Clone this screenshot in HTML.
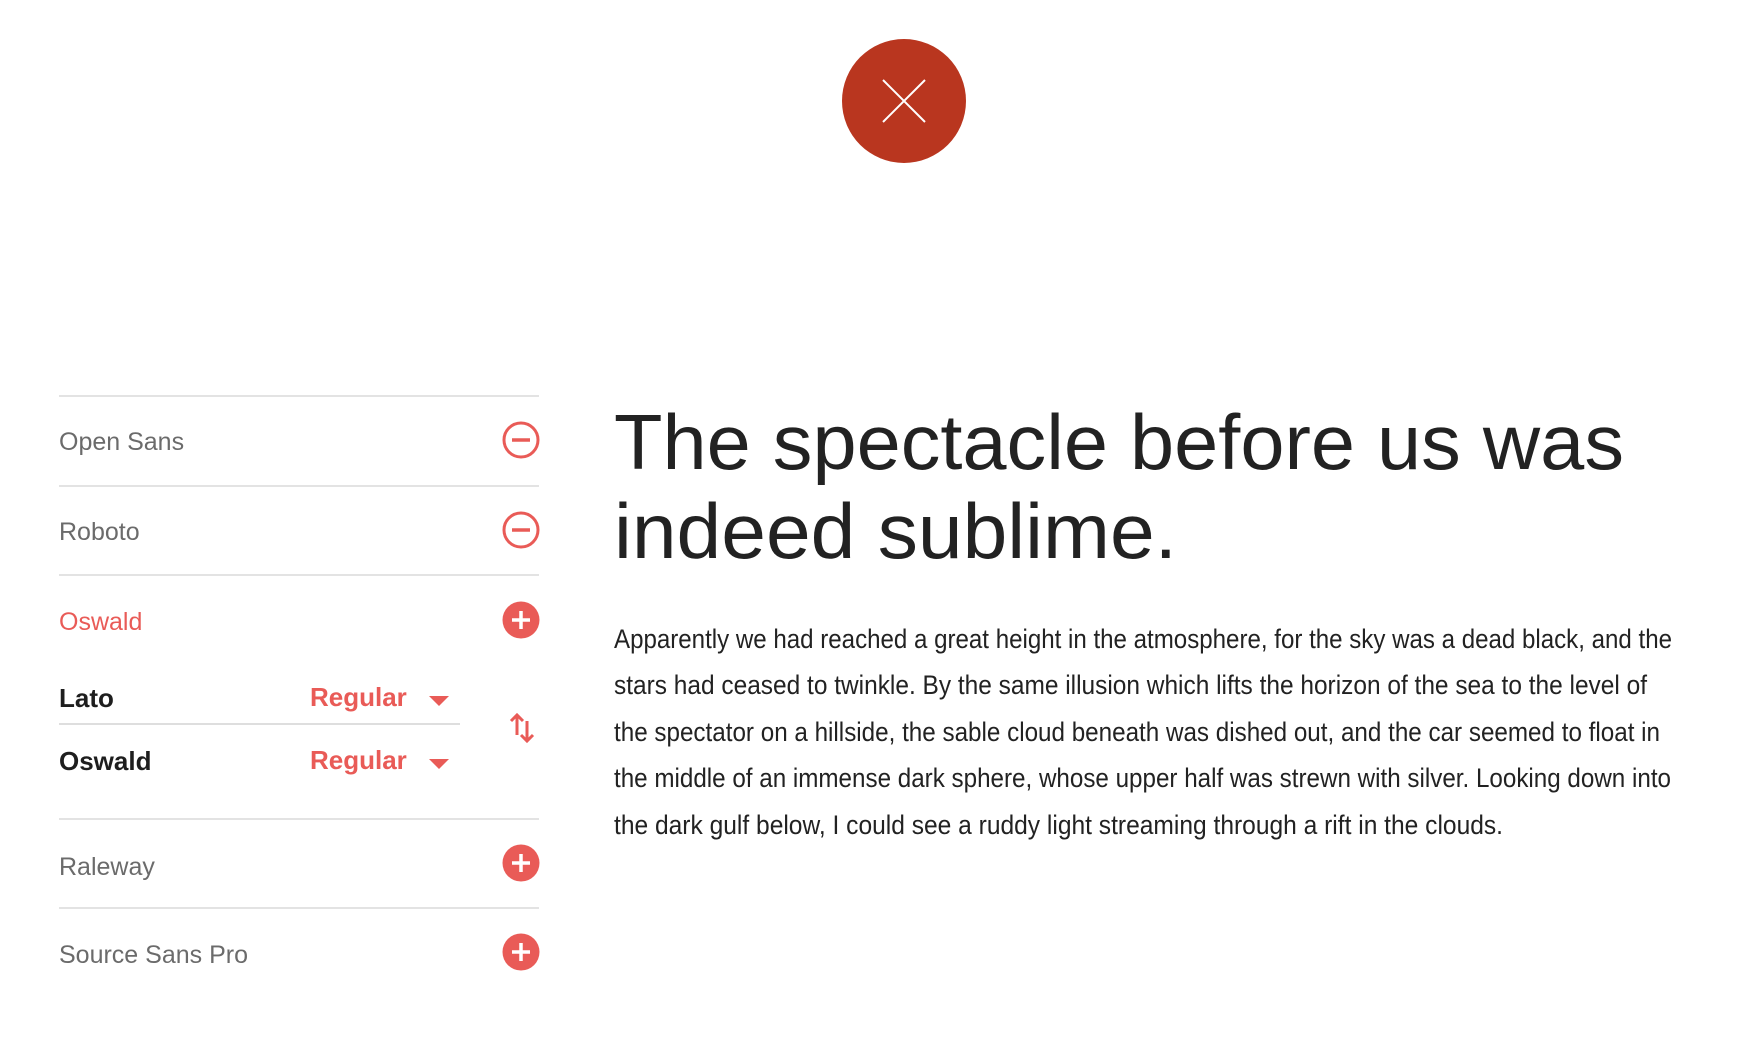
<!DOCTYPE html>
<html><head><meta charset="utf-8"><style>
html,body{margin:0;padding:0;background:#fff;width:1742px;height:1040px;overflow:hidden;position:relative;font-family:"Liberation Sans",sans-serif}
.line{position:absolute;left:59px;width:480px;height:2px;background:#e3e3e3}
.t{position:absolute;left:59px;font-size:25px;color:#6b6b6b;line-height:1}
.ic{position:absolute;left:502px;width:38px;height:38px}
.r{position:absolute;font-size:26px;font-weight:bold;color:#e95b57;line-height:1}
.d{position:absolute;left:59px;font-size:26px;font-weight:bold;color:#1e1e1e;line-height:1}
.car{position:absolute;width:0;height:0;border-left:10px solid transparent;border-right:10px solid transparent;border-top:10px solid #e95b57}
</style></head><body>
<svg style="position:absolute;left:842px;top:39px" width="124" height="124"><circle cx="62" cy="62" r="62" fill="#b9361f"/><path d="M41 41L83 83M83 41L41 83" stroke="#fff" stroke-width="2"/></svg>

<div class="line" style="top:395px"></div>
<div class="line" style="top:485px"></div>
<div class="line" style="top:574px"></div>
<div class="line" style="top:818px"></div>
<div class="line" style="top:907px"></div>

<div class="t" style="top:430px">Open Sans</div>
<div class="t" style="top:520px">Roboto</div>
<div class="t" style="top:610px;color:#e95b57">Oswald</div>
<div class="t" style="top:855px">Raleway</div>
<div class="t" style="top:943px">Source Sans Pro</div>

<svg class="ic" style="top:421px" viewBox="0 0 38 38"><circle cx="19" cy="19" r="17" fill="none" stroke="#e95b57" stroke-width="3"/><path d="M10 19H28" stroke="#e95b57" stroke-width="3.5"/></svg>
<svg class="ic" style="top:511px" viewBox="0 0 38 38"><circle cx="19" cy="19" r="17" fill="none" stroke="#e95b57" stroke-width="3"/><path d="M10 19H28" stroke="#e95b57" stroke-width="3.5"/></svg>
<svg class="ic" style="top:601px" viewBox="0 0 38 38"><circle cx="19" cy="19" r="18.5" fill="#e95b57"/><path d="M10 19H28M19 10V28" stroke="#fff" stroke-width="3.5"/></svg>
<svg class="ic" style="top:844px" viewBox="0 0 38 38"><circle cx="19" cy="19" r="18.5" fill="#e95b57"/><path d="M10 19H28M19 10V28" stroke="#fff" stroke-width="3.5"/></svg>
<svg class="ic" style="top:933px" viewBox="0 0 38 38"><circle cx="19" cy="19" r="18.5" fill="#e95b57"/><path d="M10 19H28M19 10V28" stroke="#fff" stroke-width="3.5"/></svg>

<div class="d" style="top:685px">Lato</div>
<div class="d" style="top:748px">Oswald</div>
<div class="r" style="top:684px;left:310px">Regular</div>
<div class="r" style="top:747px;left:310px">Regular</div>
<div class="car" style="left:429px;top:696px"></div>
<div class="car" style="left:429px;top:759px"></div>
<div style="position:absolute;left:59px;top:723px;width:401px;height:2px;background:#dedede"></div>
<svg style="position:absolute;left:506px;top:711px" width="32" height="34" viewBox="0 0 32 34"><path d="M11 24V4M5 10L11 4L17 10" fill="none" stroke="#e95b57" stroke-width="3"/><path d="M21 10V30M15 24L21 30L27 24" fill="none" stroke="#e95b57" stroke-width="3"/></svg>

<svg style="position:absolute;left:0;top:0" width="1742" height="1040">
<g font-family="Liberation Sans, sans-serif" fill="#222" font-size="78">
<text x="614" y="469" textLength="1010" lengthAdjust="spacingAndGlyphs">The spectacle before us was</text>
<text x="614" y="558" textLength="563" lengthAdjust="spacingAndGlyphs">indeed sublime.</text>
</g>
<g font-family="Liberation Sans Narrow, Liberation Sans, sans-serif" fill="#222" font-size="27">
<text x="614" y="648" textLength="1058" lengthAdjust="spacingAndGlyphs">Apparently we had reached a great height in the atmosphere, for the sky was a dead black, and the</text>
<text x="614" y="694" textLength="1033" lengthAdjust="spacingAndGlyphs">stars had ceased to twinkle. By the same illusion which lifts the horizon of the sea to the level of</text>
<text x="614" y="741" textLength="1046" lengthAdjust="spacingAndGlyphs">the spectator on a hillside, the sable cloud beneath was dished out, and the car seemed to float in</text>
<text x="614" y="787" textLength="1057" lengthAdjust="spacingAndGlyphs">the middle of an immense dark sphere, whose upper half was strewn with silver. Looking down into</text>
<text x="614" y="834" textLength="889" lengthAdjust="spacingAndGlyphs">the dark gulf below, I could see a ruddy light streaming through a rift in the clouds.</text>
</g>
</svg>
</body></html>
